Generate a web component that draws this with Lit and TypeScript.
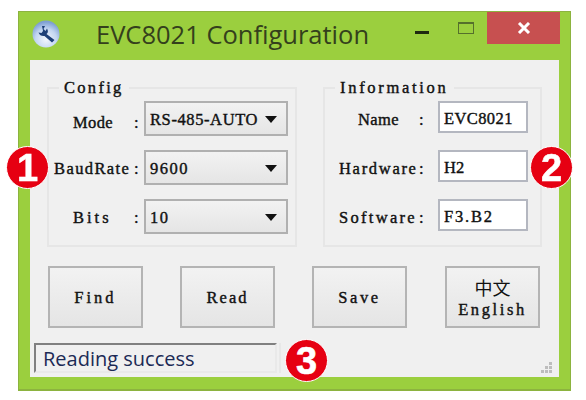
import { LitElement, html, css } from "lit";
import { customElement } from "lit/decorators.js";

const arrow = html`<svg class="arrow" width="12" height="7" viewBox="0 0 12 7"><path d="M0 0H12L6 7Z" fill="#111"/></svg>`;

/* The reference font is a fixed-pitch slab; each string gets the tracking that brings it to that pitch. */
type T = [string, number];
const t = ([s, ls]: T) => html`<span style="letter-spacing:${ls}px">${s}</span>`;

interface Row { name: T; indent: boolean; value: T; }
const cfgRows: Row[] = [
  { name: ["Mode", 0.4], indent: true, value: ["RS-485-AUTO", 0.6] },
  { name: ["BaudRate", 1.4], indent: false, value: ["9600", 1.5] },
  { name: ["Bits", 3], indent: true, value: ["10", 1.5] },
];
const infoRows: Row[] = [
  { name: ["Name", 0.4], indent: true, value: ["EVC8021", 0.4] },
  { name: ["Hardware", 1.7], indent: false, value: ["H2", 0] },
  { name: ["Software", 2.3], indent: false, value: ["F3.B2", 1.8] },
];

@customElement("app-root")
export class AppRoot extends LitElement {
  static styles = css`
    :host { display: block; width: 586px; height: 400px; background: #fff; overflow: hidden; }
    .page { box-sizing: border-box; width: 586px; height: 400px; padding: 11px 15px 10px 18px; filter: blur(0.35px); }
    .win { position: relative; box-sizing: border-box; width: 553px; height: 380px; display: flex; flex-direction: column;
      background: #9bcf3e; border: 1px solid #8cb33f; border-bottom-width: 2px; }
    .title { flex: none; height: 48px; display: flex; align-items: flex-start; }
    .icon { flex: none; width: 28px; height: 28px; margin: 8px 0 0 13px; }
    .name { margin: 6px 0 0 36px; font: 25.5px/32px "Open Sans", "Noto Sans", sans-serif; color: #34401c; white-space: nowrap; }
    .ctrls { margin-left: auto; display: flex; align-items: flex-start; margin-right: 10px; }
    .min { width: 14px; height: 3px; margin: 19px 29px 0 0; background: #1f2a10; }
    .max { box-sizing: border-box; width: 16px; height: 12px; margin: 10px 13px 0 0; border: 1px solid #55702c; border-top-width: 2px; }
    .close { width: 73px; height: 32px; background: #c75050; display: flex; align-items: center; justify-content: center; }
    .client { position: relative; flex: 1; margin: 0 11px 12px; background: #f0f0f0; padding-top: 27px;
      font: 16.5px/20px "Liberation Serif", serif; color: #111; -webkit-text-stroke: 0.4px #111; }
    .groups { display: flex; padding-left: 17px; gap: 26px; height: 160px; }
    .group { position: relative; box-sizing: border-box; height: 160px; padding-top: 12px; border: 2px solid #e6e6e6;
      display: flex; flex-direction: column; gap: 14px; }
    .cfg { width: 250px; padding-left: 5px; }
    .info { width: 219px; padding-left: 14px; }
    .legend { position: absolute; top: -11px; left: 10px; padding: 0 5px; background: #f0f0f0; white-space: pre; }
    .row { display: flex; align-items: flex-start; height: 35px; }
    .lbl { display: flex; flex: none; line-height: 35px; padding-top: 1px; }
    .cfg .lbl { width: 90px; }
    .cfg .row:nth-child(2) .lbl { padding-top: 4px; }
    .info .lbl { width: 99px; line-height: 34px; padding-top: 2px; }
    .nm { width: 80px; flex: none; white-space: nowrap; }
    .nm.ind { box-sizing: border-box; padding-left: 19px; }
    .sel { box-sizing: border-box; width: 144px; height: 35px; display: flex; align-items: center; padding: 2px 9px 0 4px;
      border: 2px solid #b0b0b0; background: linear-gradient(#f2f2f2, #e5e5e5); }
    .sel span { flex: 1; }
    .input { box-sizing: border-box; width: 90px; height: 32px; display: flex; align-items: center; padding: 3px 0 0 4px;
      border: 2px solid #b4b7c0; background: #fff; }
    .btns { display: flex; gap: 37px; padding-left: 18px; margin-top: 19px; }
    .btn { box-sizing: border-box; width: 95px; height: 62px; display: flex; flex-direction: column; align-items: center; justify-content: center;
      border: 2px solid #b4b4b4; background: linear-gradient(#f2f2f2, #e5e5e5); line-height: 23px; }
    .btn:last-child { margin-left: 1px; padding-top: 3px; }
    .cjk { font: 18px/22px "Noto Sans CJK SC", sans-serif; -webkit-text-stroke: 0; }
    .status-row { display: flex; align-items: stretch; margin: 15px 0 0 4px; height: 30px; }
    .status { box-sizing: border-box; width: 243px; border: 2px solid #e9e9e9; border-top-color: #808080; border-left-color: #808080;
      padding-left: 7px; font: 20px/27px "Open Sans", "Noto Sans", sans-serif; color: #1c2a55; -webkit-text-stroke: 0; }
    .sep { width: 2px; margin-left: 2px; background: #e8e8e8; }
    .grip { position: absolute; right: 5px; bottom: 2px; }
    .badge { position: absolute; box-sizing: border-box; width: 43px; height: 43px; border-radius: 50%; background: #e60012; border: 1px solid #fff;
      display: flex; align-items: center; justify-content: center; font: 700 38px/42px "Liberation Sans", Arial, sans-serif; color: #fff; -webkit-text-stroke: 0.6px #fff; }
    .b1 { left: -13px; top: 134px; }
    .b2 { left: 511px; top: 134px; }
    .b3 { left: 266px; top: 327px; }
  `;

  private rows(items: Row[], kind: "sel" | "input") {
    return items.map((r) => html`<div class="row">
      <div class="lbl"><span class="nm ${r.indent ? "ind" : ""}">${t(r.name)}</span><span>:</span></div>
      ${kind === "sel"
        ? html`<div class="sel">${t(r.value)}${arrow}</div>`
        : html`<div class="input">${t(r.value)}</div>`}
    </div>`);
  }

  render() {
    return html`<div class="page"><div class="win">
      <div class="title">
        <svg class="icon" viewBox="0 0 28 28">
          <defs><radialGradient id="g" cx="50%" cy="70%" r="65%"><stop offset="0" stop-color="#f2f6fd"/><stop offset="0.6" stop-color="#c3d6f2"/><stop offset="1" stop-color="#7e9fd3"/></radialGradient></defs>
          <circle cx="14" cy="14" r="13.5" fill="url(#g)"/>
          <path d="M10 6 L13 6 L11.5 9 L13.5 11 L15 8.5 Q17 12 14.5 14 L22.5 20 L20 22.5 L12.5 16 Q8 16.5 6.5 12.5 L9.5 13 L11 11 Z" fill="#1d3f78"/>
        </svg>
        <div class="name">EVC8021 Configuration</div>
        <div class="ctrls">
          <div class="min"></div>
          <div class="max"></div>
          <div class="close"><svg width="14" height="12" viewBox="0 0 14 12"><path d="M2 1L12 11M12 1L2 11" stroke="#fff" stroke-width="3" fill="none"/></svg></div>
        </div>
      </div>
      <div class="client">
        <div class="groups">
          <div class="group cfg"><div class="legend">${t(["Config", 2.3])}</div>${this.rows(cfgRows, "sel")}</div>
          <div class="group info"><div class="legend">${t(["Information", 2.7])}</div>${this.rows(infoRows, "input")}</div>
        </div>
        <div class="btns">
          <div class="btn">${t(["Find", 3])}</div>
          <div class="btn">${t(["Read", 2])}</div>
          <div class="btn">${t(["Save", 2.6])}</div>
          <div class="btn"><span class="cjk">中文</span>${t(["English", 2.6])}</div>
        </div>
        <div class="status-row"><div class="status">Reading success</div><div class="sep"></div></div>
        <svg class="grip" width="14" height="14" viewBox="0 0 14 14" fill="#bdbdbd">
          <rect x="9" y="1" width="3" height="3"/><rect x="5" y="5" width="3" height="3"/><rect x="9" y="5" width="3" height="3"/>
          <rect x="1" y="9" width="3" height="3"/><rect x="5" y="9" width="3" height="3"/><rect x="9" y="9" width="3" height="3"/>
        </svg>
      </div>
      <div class="badge b1">1</div>
      <div class="badge b2">2</div>
      <div class="badge b3">3</div>
    </div></div>`;
  }
}
